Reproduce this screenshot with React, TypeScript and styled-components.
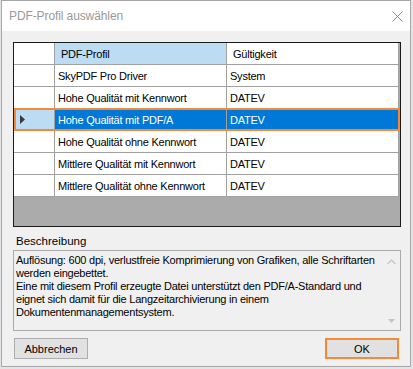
import styled, { createGlobalStyle } from 'styled-components';

type Profile = {
  name: string;
  validity: string;
};

const profiles: Profile[] = [
  { name: 'SkyPDF Pro Driver', validity: 'System' },
  { name: 'Hohe Qualität mit Kennwort', validity: 'DATEV' },
  { name: 'Hohe Qualität mit PDF/A', validity: 'DATEV' },
  { name: 'Hohe Qualität ohne Kennwort', validity: 'DATEV' },
  { name: 'Mittlere Qualität mit Kennwort', validity: 'DATEV' },
  { name: 'Mittlere Qualität ohne Kennwort', validity: 'DATEV' },
];

const selectedIndex = 2;

const description = `Auflösung: 600 dpi, verlustfreie Komprimierung von Grafiken, alle Schriftarten
werden eingebettet.
Eine mit diesem Profil erzeugte Datei unterstützt den PDF/A-Standard und
eignet sich damit für die Langzeitarchivierung in einem
Dokumentenmanagementsystem.`;

const App = () => {
  return (
    <>
      <GlobalStyle />
      <Window>
        <TitleBar>
          <Title>PDF-Profil auswählen</Title>
          <svg width="11" height="11" viewBox="0 0 11 11">
            <path d="M0.5 0.5 L10.5 10.5 M10.5 0.5 L0.5 10.5" stroke="#8a8a8a" strokeWidth="1" />
          </svg>
        </TitleBar>

        <Body>
          <Grid>
            <Row>
              <RowHeader />
              <HeaderCell $highlight>PDF-Profil</HeaderCell>
              <HeaderCell>Gültigkeit</HeaderCell>
            </Row>
            {profiles.map((p, i) => (
              <Row key={p.name} $selected={i === selectedIndex}>
                <RowHeader $selected={i === selectedIndex}>
                  {i === selectedIndex && (
                    <svg width="6" height="9" viewBox="0 0 6 9">
                      <path d="M0 0 L5 4.5 L0 9 Z" fill="#3a3a3a" />
                    </svg>
                  )}
                </RowHeader>
                <Cell $selected={i === selectedIndex}>{p.name}</Cell>
                <Cell $selected={i === selectedIndex}>{p.validity}</Cell>
              </Row>
            ))}
          </Grid>

          <Label>Beschreibung</Label>
          <TextBox>
            <TextContent>{description}</TextContent>
            <ScrollBar>
              <svg width="9" height="6" viewBox="0 0 9 6">
                <path d="M0.5 5 L4.5 1 L8.5 5" stroke="#c4c4c4" strokeWidth="1.2" fill="none" />
              </svg>
              <svg width="7" height="4" viewBox="0 0 7 4">
                <path d="M0 0 L7 0 L3.5 4 Z" fill="#c4c4c4" />
              </svg>
            </ScrollBar>
          </TextBox>

          <ButtonRow>
            <Button>Abbrechen</Button>
            <Button $default>OK</Button>
          </ButtonRow>
        </Body>
      </Window>
    </>
  );
};

const GlobalStyle = createGlobalStyle`
  html, body {
    margin: 0;
    padding: 0;
    overflow: hidden;
  }

  body {
    background: #e4e4e4;
    font-family: "Liberation Sans", Arial, sans-serif;
  }
`;

const Window = styled.div`
  box-sizing: border-box;
  width: 410px;
  height: 367px;
  margin-left: 1px;
  border: 1px solid #a6a6a6;
  background: #f0f0f0;
  display: flex;
  flex-direction: column;
`;

const TitleBar = styled.div`
  height: 30px;
  flex-shrink: 0;
  background: #ffffff;
  display: flex;
  align-items: center;
  justify-content: space-between;
  padding: 0 7px 0 7px;
`;

const Title = styled.span`
  font-size: 12px;
  letter-spacing: -0.1px;
  color: #999999;
`;

const Body = styled.div`
  flex: 1;
  display: flex;
  flex-direction: column;
  padding: 11px 9px 0 11px;
`;

const Grid = styled.div`
  box-sizing: border-box;
  height: 185px;
  border: 1px solid #1a1a1a;
  background: #ababab;
  display: flex;
  flex-direction: column;
  font-size: 11px;
  letter-spacing: -0.23px;
`;

const Row = styled.div<{ $selected?: boolean }>`
  position: relative;
  display: grid;
  grid-template-columns: 41px 172px 172px;
  height: 22px;

  ${({ $selected }) =>
    $selected &&
    `
    &::after {
      content: '';
      position: absolute;
      top: -1px;
      left: 0;
      right: 0;
      bottom: 0;
      border: 2px solid #f5893a;
      pointer-events: none;
    }
  `}
`;

const BaseCell = styled.div`
  box-sizing: border-box;
  border-right: 1px solid #a0a0a0;
  border-bottom: 1px solid #a0a0a0;
  display: flex;
  align-items: center;
  white-space: nowrap;
  overflow: hidden;
`;

const RowHeader = styled(BaseCell)<{ $selected?: boolean }>`
  background: ${({ $selected }) => ($selected ? '#bcdcf4' : '#ffffff')};
  padding-left: 6px;
`;

const HeaderCell = styled(BaseCell)<{ $highlight?: boolean }>`
  background: ${({ $highlight }) => ($highlight ? '#bcdcf4' : '#ffffff')};
  color: #000;
  padding-left: 6px;
`;

const Cell = styled(BaseCell)<{ $selected?: boolean }>`
  background: ${({ $selected }) => ($selected ? '#0078d7' : '#ffffff')};
  color: ${({ $selected }) => ($selected ? '#ffffff' : '#000000')};
  padding-left: 3px;
`;

const Label = styled.div`
  margin-top: 6px;
  height: 17px;
  line-height: 17px;
  padding-left: 3px;
  font-size: 11.5px;
  color: #000;
`;

const TextBox = styled.div`
  box-sizing: border-box;
  height: 81px;
  border: 1px solid #ababab;
  background: #f0f0f0;
  display: flex;
`;

const TextContent = styled.div`
  flex: 1;
  padding: 3px 0 0 2px;
  font-size: 11px;
  line-height: 13px;
  letter-spacing: -0.23px;
  white-space: pre-line;
  color: #000;
`;

const ScrollBar = styled.div`
  width: 17px;
  display: flex;
  flex-direction: column;
  align-items: center;
  justify-content: space-between;
  padding: 8px 0 7px;
`;

const ButtonRow = styled.div`
  margin-top: 7px;
  display: flex;
  justify-content: space-between;
  padding: 0 2px 0 1px;
`;

const Button = styled.button<{ $default?: boolean }>`
  box-sizing: border-box;
  width: 74px;
  height: 21px;
  padding: 0;
  background: #e1e1e1;
  border: ${({ $default }) => ($default ? '2px solid #f5893a' : '1px solid #adadad')};
  border-radius: 0;
  font-family: "Liberation Sans", Arial, sans-serif;
  font-size: 11px;
  color: #000;
`;

export default App;
